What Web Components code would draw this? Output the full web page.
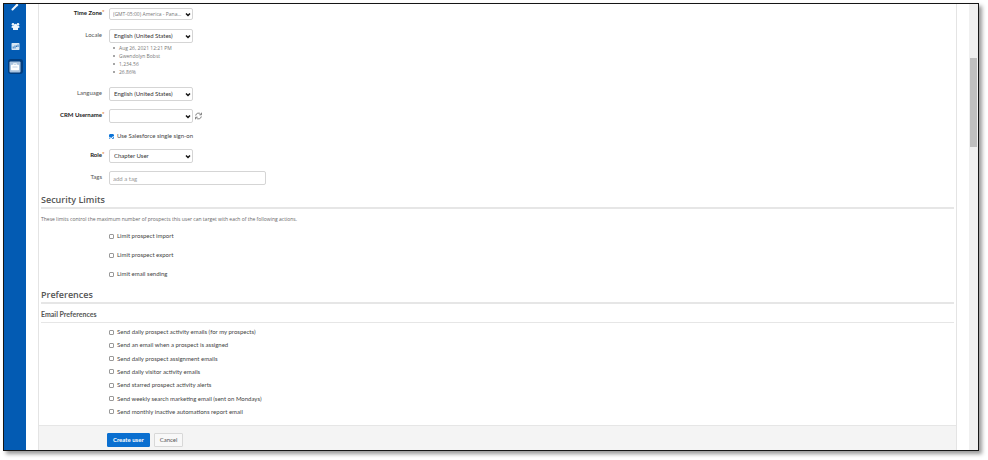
<!DOCTYPE html>
<html lang="en">
  <head>
    <meta charset="UTF-8" />
    <meta name="viewport" content="width=device-width, initial-scale=1.0" />
    <title>Create User</title>
    <style>
      body {
        margin: 0;
        background: #fff;
        color: #444;
        font: 6px/8px Lato, "Open Sans", sans-serif;
      }
    </style>
  </head>
  <body>
    <app-frame>
      <side-nav slot="nav"></side-nav>
      <form-panel>
        <form-row label="Time Zone" required>
          <select-box value="(GMT-05:00) America - Pana..." compact></select-box>
        </form-row>
        <form-row label="Locale">
          <select-box value="English (United States)"></select-box>
          <locale-sample></locale-sample>
        </form-row>
        <form-row label="Language">
          <select-box value="English (United States)"></select-box>
        </form-row>
        <form-row label="CRM Username" required>
          <select-box value="" refresh></select-box>
        </form-row>
        <form-row>
          <check-box label="Use Salesforce single sign-on" checked></check-box>
        </form-row>
        <form-row label="Role" required>
          <select-box value="Chapter User"></select-box>
        </form-row>
        <form-row label="Tags">
          <tag-input></tag-input>
        </form-row>
        <section-title>Security Limits</section-title>
        <section-note>These limits control the maximum number of prospects this user can target with each of the following actions.</section-note>
        <check-list spacious>
          <check-box label="Limit prospect import"></check-box>
          <check-box label="Limit prospect export"></check-box>
          <check-box label="Limit email sending"></check-box>
        </check-list>
        <section-title>Preferences</section-title>
        <section-title small>Email Preferences</section-title>
        <check-list>
          <check-box label="Send daily prospect activity emails (for my prospects)"></check-box>
          <check-box label="Send an email when a prospect is assigned"></check-box>
          <check-box label="Send daily prospect assignment emails"></check-box>
          <check-box label="Send daily visitor activity emails"></check-box>
          <check-box label="Send starred prospect activity alerts"></check-box>
          <check-box label="Send weekly search marketing email (sent on Mondays)"></check-box>
          <check-box label="Send monthly inactive automations report email"></check-box>
        </check-list>
        <action-button slot="actions" primary>Create user</action-button>
        <action-button slot="actions">Cancel</action-button>
      </form-panel>
    </app-frame>
    <script>
      class BaseElement extends HTMLElement {
        connectedCallback() {
          if (this.shadowRoot) return;
          this.attachShadow({ mode: "open" });
          this.shadowRoot.innerHTML =
            "<style>*{box-sizing:border-box}</style>" + this.template();
        }
        template() {
          return "<slot></slot>";
        }
      }

      class AppFrame extends BaseElement {
        template() {
          return `
            <style>
              :host {
                display: flex;
                box-sizing: border-box;
                height: calc(100vh - 12px);
                margin: 3px 9px 9px 3px;
                border: 1px solid #161616;
                box-shadow: 3px 3px 4px #999;
                background: #fff;
                overflow: hidden;
              }
              main { flex: 1; min-width: 0; display: flex; padding: 0 12px; }
              .scrollbar { width: 9px; padding: 54px 1px 0; background: #f0f0f0; }
              .thumb { height: 89px; background: #bfbfbf; }
            </style>
            <slot name="nav"></slot>
            <main><slot></slot></main>
            <div class="scrollbar"><div class="thumb"></div></div>`;
        }
      }
      customElements.define("app-frame", AppFrame);

      class SideNav extends BaseElement {
        template() {
          return `
            <style>
              :host { display: block; width: 22px; background: #035bb3; }
              nav { display: flex; flex-direction: column; align-items: center; gap: 5px; }
              a { display: flex; align-items: center; justify-content: center; width: 15px; height: 15px; border-radius: 3px; color: #eef5fb; }
              a:first-child { margin-top: -5px; }
              a.active { background: #033d7d; }
              svg { display: block; }
            </style>
            <nav>
              <a href="#" aria-label="Build"><svg width="9" height="9" viewBox="0 0 9 9"><path d="M1.500 7.500 6 3" stroke="currentColor" stroke-width="2" stroke-linecap="round"/><path d="M6 1.2 6.6 2.4 7.8 3 6.6 3.6 6 4.8 5.4 3.6 4.2 3 5.4 2.4Z" fill="currentColor"/></svg></a>
              <a href="#" aria-label="Prospects"><svg width="9" height="9" viewBox="0 0 9 9" fill="currentColor"><circle cx="2" cy="2.3" r="1.3"/><circle cx="7" cy="2.3" r="1.3"/><circle cx="4.5" cy="3.4" r="1.6"/><path d="M.4 5.6Q.4 3.6 2 3.6H7Q8.6 3.6 8.6 5.6L7 6V8H2V6Z"/></svg></a>
              <a href="#" aria-label="Reports"><svg width="9" height="9" viewBox="0 0 9 9"><rect x=".5" y="1" width="8" height="7" rx=".7" fill="currentColor" fill-opacity=".9"/><path d="M2.2 6.5V4.500M4 6.500V3.500M5.500 3.500V5M7 2.500V5" stroke="#035bb3" stroke-width=".8"/></svg></a>
              <a href="#" class="active" aria-label="Admin"><svg width="12" height="12" viewBox="0 0 12 12"><rect x=".5" y=".5" width="11" height="11" rx="1" fill="#a9c3df"/><path d="M4.5 3.800V2.700H7.500V3.800" fill="none" stroke="#fff" stroke-width=".8"/><rect x="2" y="3.700" width="8" height="5.500" rx=".6" fill="#fff"/><path d="M3.500 6H8.500" stroke="#a9c3df" stroke-width=".7"/></svg></a>
            </nav>`;
        }
      }
      customElements.define("side-nav", SideNav);

      class FormPanel extends BaseElement {
        template() {
          return `
            <style>
              :host { flex: 1; min-width: 0; display: flex; flex-direction: column; border: 1px solid #e4e4e4; border-width: 0 1px; }
              form { display: flex; flex-direction: column; flex: 1; }
              .fields { display: flex; flex-direction: column; padding: 3px 2px 8px; }
              footer { display: flex; align-items: flex-start; gap: 4px; flex: 1; padding: 7px 68px 0; border-top: 1px solid #e6e6e6; background: #f4f4f4; }
            </style>
            <form>
              <div class="fields"><slot></slot></div>
              <footer><slot name="actions"></slot></footer>
            </form>`;
        }
      }
      customElements.define("form-panel", FormPanel);

      class FormRow extends BaseElement {
        template() {
          const label = this.getAttribute("label") || "";
          const required = this.hasAttribute("required");
          return `
            <style>
              :host { display: grid; grid-template-columns: 64px 1fr; column-gap: 4px; margin-bottom: 8px; }
              .label { display: flex; justify-content: flex-end; padding-top: 2px; white-space: nowrap; color: #555; }
              .label.required { color: #222; font-weight: 700; }
              .label:not(.required) { padding-right: 3px; }
              i { width: 3px; color: #e07a1f; font-style: normal; line-height: 6px; }
              .control { min-width: 0; }
            </style>
            <span class="label ${required ? "required" : ""}">${label}${required ? "<i>*</i>" : ""}</span>
            <div class="control"><slot></slot></div>`;
        }
      }
      customElements.define("form-row", FormRow);

      class SelectBox extends BaseElement {
        template() {
          const name = this.parentElement.getAttribute("label");
          return `
            <style>
              :host { display: flex; align-items: center; gap: 2px; min-height: 14px; }
              .box { display: grid; width: 84px; color: #333; }
              select, .arrow { grid-area: 1 / 1; }
              select {
                appearance: none;
                width: 100%;
                height: 14px;
                padding: 0 4px;
                border: 1px solid #d5d5d5;
                border-radius: 2px;
                background: #fff;
                color: #333;
                font: inherit;
              }
              :host([compact]) select { height: 12px; padding: 0 3px; color: #777; font-size: 5px; font-family: "Open Sans", sans-serif; }
              .arrow { justify-self: end; align-self: center; margin-right: 2px; pointer-events: none; z-index: 1; }
              button { display: flex; padding: 0; border: 0; background: none; color: #666; }
            </style>
            <div class="box">
              <select aria-label="${name}"><option>${this.getAttribute("value")}</option></select>
              <svg class="arrow" width="6" height="5" viewBox="0 0 6 5"><path d="M1 1.500 3 3.500 5 1.500" fill="none" stroke="#111" stroke-width="1.500"/></svg>
            </div>
            ${this.hasAttribute("refresh") ? `<button type="button" aria-label="Refresh"><svg width="7" height="8" viewBox="0 0 7 8" fill="none" stroke="currentColor" stroke-width=".8"><path d="M.7 3.600A2.800 2.800 0 0 1 5.800 2.300M6.500.7V2.800H4.300M6.300 4.400A2.800 2.800 0 0 1 1.200 5.700M.5 7.300V5.200H2.700"/></svg></button>` : ""}`;
        }
      }
      customElements.define("select-box", SelectBox);

      class LocaleSample extends BaseElement {
        template() {
          return `
            <style>
              :host { display: block; }
              ul { margin: 1px 0 3px; padding: 0 0 0 4px; list-style: none; color: #777; font: 5px/8px "Open Sans", sans-serif; }
              li { display: flex; align-items: center; gap: 4px; }
              li::before { content: ""; width: 2px; height: 2px; border-radius: 1px; background: #888; }
            </style>
            <ul>
              <li>Aug 26, 2021 12:21 PM</li>
              <li>Gwendolyn Bobst</li>
              <li>1,234.56</li>
              <li>26.86%</li>
            </ul>`;
        }
      }
      customElements.define("locale-sample", LocaleSample);

      class CheckBox extends BaseElement {
        template() {
          return `
            <style>
              :host { display: block; }
              label { display: flex; align-items: center; gap: 3px; line-height: 10px; white-space: nowrap; }
              input { appearance: none; display: grid; place-items: center; width: 5px; height: 5px; margin: 0; border: 1px solid #999; border-radius: 1px; background: #fff; }
              input:checked { border-color: #0b74d8; background: #0b74d8; }
              input:checked::after { content: ""; width: 2px; height: 3px; border: solid #fff; border-width: 0 1px 1px 0; transform: rotate(45deg); }
            </style>
            <label><input type="checkbox" ${this.hasAttribute("checked") ? "checked" : ""} />${this.getAttribute("label")}</label>`;
        }
      }
      customElements.define("check-box", CheckBox);

      class TagInput extends BaseElement {
        template() {
          return `
            <style>
              :host { display: block; }
              input { display: block; width: 157px; height: 14px; padding: 0 3px; border: 1px solid #d5d5d5; border-radius: 2px; color: #333; font: inherit; }
              input::placeholder { color: #999; }
            </style>
            <input type="text" placeholder="add a tag" aria-label="Tags" />`;
        }
      }
      customElements.define("tag-input", TagInput);

      class SectionTitle extends BaseElement {
        template() {
          const tag = this.hasAttribute("small") ? "h3" : "h2";
          return `
            <style>
              :host { display: block; }
              h2 { margin: 0; border-bottom: 2px solid #e6e6e6; font: 600 9px/14px "Open Sans", sans-serif; color: #555; }
              h3 { margin: 5px 0 4px; padding-bottom: 3px; border-bottom: 1px solid #e6e6e6; font-size: 7px; line-height: 10px; color: #555; }
            </style>
            <${tag}><slot></slot></${tag}>`;
        }
      }
      customElements.define("section-title", SectionTitle);

      class SectionNote extends BaseElement {
        template() {
          return `
            <style>
              :host { display: block; }
              p { margin: 6px 0 8px; font: 5px/8px "Open Sans", sans-serif; color: #666; }
            </style>
            <p><slot></slot></p>`;
        }
      }
      customElements.define("section-note", SectionNote);

      class CheckList extends BaseElement {
        template() {
          return `
            <style>
              :host { display: flex; flex-direction: column; justify-content: space-between; min-height: 90px; padding-left: 68px; }
              :host([spacious]) { gap: 9px; min-height: 0; margin-bottom: 9px; }
            </style>
            <slot></slot>`;
        }
      }
      customElements.define("check-list", CheckList);

      class ActionButton extends BaseElement {
        template() {
          return `
            <style>
              :host { display: block; }
              button { height: 14px; padding: 0 5px; border: 1px solid #d8d8d8; border-radius: 1px; background: #f8f8f8; color: #555; font: inherit; }
              :host([primary]) button { border-color: #0a6fd0; background: #0a6fd0; color: #fff; font-weight: 700; }
            </style>
            <button type="button"><slot></slot></button>`;
        }
      }
      customElements.define("action-button", ActionButton);
    </script>
  </body>
</html>
